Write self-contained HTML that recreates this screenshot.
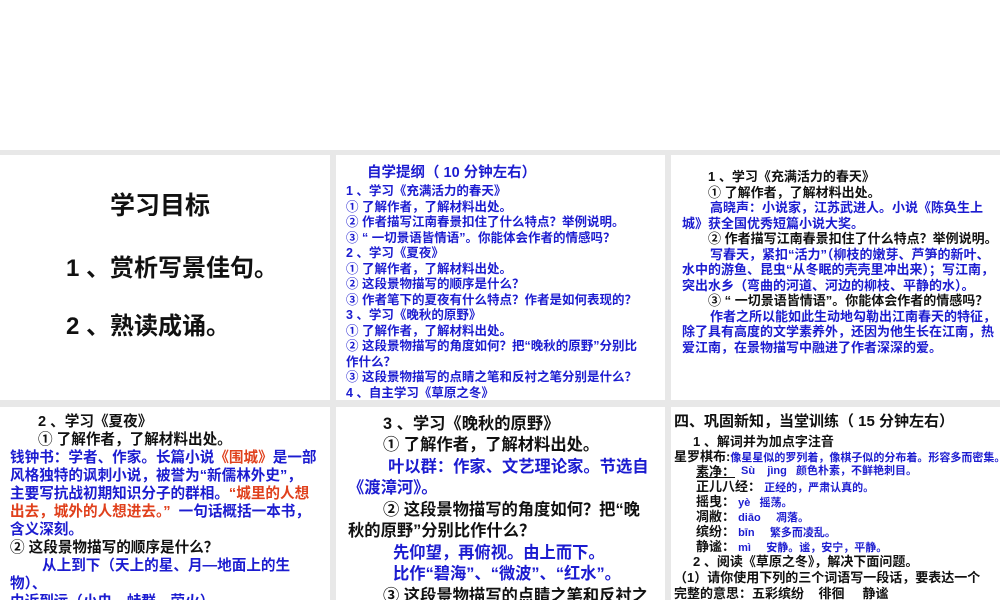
<!DOCTYPE html>
<html><head><meta charset="utf-8"><style>
*{margin:0;padding:0;box-sizing:border-box}
body{width:1000px;height:600px;background:#fff;position:relative;overflow:hidden;font-family:"Liberation Sans","Noto Sans CJK SC",sans-serif;font-weight:bold}
.bg{position:absolute;left:0;top:150px;width:1000px;height:450px;background:#e8e8e8}
.p{position:absolute;background:#fff;overflow:hidden}
.p div{white-space:nowrap;position:absolute}
.b{color:#1c1cd0}.k{color:#111}.r{color:#e0401c}
</style></head><body>
<div class="bg"></div>
<div class="p" style="left:0;top:155px;width:330px;height:245px">
<div class="k" style="left:110px;top:31px;font-size:25px">学习目标</div>
<div class="k" style="left:66px;top:93px;font-size:24px">1 、赏析写景佳句。</div>
<div class="k" style="left:66px;top:151px;font-size:24px">2 、熟读成诵。</div>
</div>
<div class="p b" style="left:336px;top:155px;width:329px;height:245px;font-size:12.5px">
<div style="left:31px;top:6px;font-size:14.5px">自学提纲（ 10 分钟左右）</div>
<div style="left:10px;top:25px">1 、学习《充满活力的春天》</div>
<div style="left:10px;top:40.5px">① 了解作者，了解材料出处。</div>
<div style="left:10px;top:56px">② 作者描写江南春景扣住了什么特点？举例说明。</div>
<div style="left:10px;top:71.5px">③ “ 一切景语皆情语”。你能体会作者的情感吗？</div>
<div style="left:10px;top:87px">2 、学习《夏夜》</div>
<div style="left:10px;top:102.5px">① 了解作者，了解材料出处。</div>
<div style="left:10px;top:118px">② 这段景物描写的顺序是什么？</div>
<div style="left:10px;top:133.5px">③ 作者笔下的夏夜有什么特点？作者是如何表现的？</div>
<div style="left:10px;top:149px">3 、学习《晚秋的原野》</div>
<div style="left:10px;top:164.5px">① 了解作者，了解材料出处。</div>
<div style="left:10px;top:180px">② 这段景物描写的角度如何？把“晚秋的原野”分别比</div>
<div style="left:10px;top:195.5px">作什么？</div>
<div style="left:10px;top:211px">③ 这段景物描写的点睛之笔和反衬之笔分别是什么？</div>
<div style="left:10px;top:226.5px">4 、自主学习《草原之冬》</div>
</div>
<div class="p" style="left:671px;top:155px;width:329px;height:245px;font-size:13px">
<div class="k" style="left:37px;top:11px">1 、学习《充满活力的春天》</div>
<div class="k" style="left:37px;top:26.5px">① 了解作者，了解材料出处。</div>
<div class="b" style="left:39px;top:42px">高晓声：小说家，江苏武进人。小说《陈奂生上</div>
<div class="b" style="left:11px;top:57.5px">城》获全国优秀短篇小说大奖。</div>
<div class="k" style="left:37px;top:73px">② 作者描写江南春景扣住了什么特点？举例说明。</div>
<div class="b" style="left:39px;top:88.5px">写春天，紧扣“活力”（柳枝的嫩芽、芦笋的新叶、</div>
<div class="b" style="left:11px;top:104px">水中的游鱼、昆虫“从冬眠的壳壳里冲出来）；写江南，</div>
<div class="b" style="left:11px;top:119.5px">突出水乡（弯曲的河道、河边的柳枝、平静的水）。</div>
<div class="k" style="left:37px;top:135px">③ “ 一切景语皆情语”。你能体会作者的情感吗？</div>
<div class="b" style="left:39px;top:150.5px">作者之所以能如此生动地勾勒出江南春天的特征，</div>
<div class="b" style="left:11px;top:166px">除了具有高度的文学素养外，还因为他生长在江南，热</div>
<div class="b" style="left:11px;top:181.5px">爱江南，在景物描写中融进了作者深深的爱。</div>
</div>
<div class="p" style="left:0;top:407px;width:330px;height:193px;font-size:14.6px">
<div class="k" style="left:38px;top:3px">2 、学习《夏夜》</div>
<div class="k" style="left:38px;top:21px">① 了解作者，了解材料出处。</div>
<div class="b" style="left:10px;top:39px">钱钟书：学者、作家。长篇小说<span class="r">《围城》</span>是一部</div>
<div class="b" style="left:10px;top:57px">风格独特的讽刺小说，被誉为“新儒林外史”，</div>
<div class="b" style="left:10px;top:75px">主要写抗战初期知识分子的群相。<span class="r">“城里的人想</span></div>
<div class="r" style="left:10px;top:93px">出去，城外的人想进去。” <span class="b">&nbsp;一句话概括一本书，</span></div>
<div class="b" style="left:10px;top:111px">含义深刻。</div>
<div class="k" style="left:10px;top:129px">② 这段景物描写的顺序是什么？</div>
<div class="b" style="left:42px;top:147px">从上到下（天上的星、月—地面上的生</div>
<div class="b" style="left:10px;top:165px">物）、</div>
<div class="b" style="left:10px;top:183px">由近到远（小虫—蛙群、萤火）。</div>
</div>
<div class="p" style="left:336px;top:407px;width:329px;height:193px;font-size:16.3px">
<div class="k" style="left:47px;top:3px">3 、学习《晚秋的原野》</div>
<div class="k" style="left:47px;top:24px">① 了解作者，了解材料出处。</div>
<div class="b" style="left:52px;top:46px">叶以群：作家、文艺理论家。节选自</div>
<div class="b" style="left:12px;top:67px">《渡漳河》。</div>
<div class="k" style="left:47px;top:89px">② 这段景物描写的角度如何？把“晚</div>
<div class="k" style="left:12px;top:110px">秋的原野”分别比作什么？</div>
<div class="b" style="left:57px;top:132px">先仰望，再俯视。由上而下。</div>
<div class="b" style="left:57px;top:153px">比作“碧海”、“微波”、“红水”。</div>
<div class="k" style="left:47px;top:175px">③ 这段景物描写的点睛之笔和反衬之</div>
<div class="k" style="left:12px;top:196px">笔分别是什么？</div>
</div>
<div class="p" style="left:671px;top:407px;width:329px;height:193px;font-size:13px">
<div class="k" style="left:3px;top:3px;font-size:15px">四、巩固新知，当堂训练（ 15 分钟左右）</div>
<div class="k" style="left:22px;top:24px">1 、解词并为加点字注音</div>
<div class="k" style="left:3px;top:39px">星罗棋布:<span class="b" style="font-size:11px">像星星似的罗列着，像棋子似的分布着。形容多而密集。</span></div>
<div class="k" style="left:25px;top:54px;text-decoration:underline">素净：</div><div class="b" style="left:70px;top:55px;font-size:11px">Sù &nbsp;&nbsp;&nbsp;jìng &nbsp;&nbsp;颜色朴素，不鲜艳刺目。</div>
<div class="k" style="left:25px;top:69px">正儿八经：<span class="b" style="font-size:11px"> 正经的，严肃认真的。</span></div>
<div class="k" style="left:25px;top:84px">摇曳：<span class="b" style="font-size:11px"> yè &nbsp;&nbsp;摇荡。</span></div>
<div class="k" style="left:25px;top:99px">凋敝：<span class="b" style="font-size:11px"> diāo &nbsp;&nbsp;&nbsp;&nbsp;凋落。</span></div>
<div class="k" style="left:25px;top:114px">缤纷：<span class="b" style="font-size:11px"> bīn &nbsp;&nbsp;&nbsp;&nbsp;繁多而凌乱。</span></div>
<div class="k" style="left:25px;top:129px">静谧：<span class="b" style="font-size:11px"> mì &nbsp;&nbsp;&nbsp;&nbsp;安静。谧，安宁，平静。</span></div>
<div class="k" style="left:22px;top:144px">2 、阅读《草原之冬》，解决下面问题。</div>
<div class="k" style="left:3px;top:160px">（1）请你使用下列的三个词语写一段话，要表达一个</div>
<div class="k" style="left:3px;top:176px">完整的意思：五彩缤纷 &nbsp;&nbsp;&nbsp;徘徊 &nbsp;&nbsp;&nbsp;&nbsp;静谧</div>
</div>
</body></html>
